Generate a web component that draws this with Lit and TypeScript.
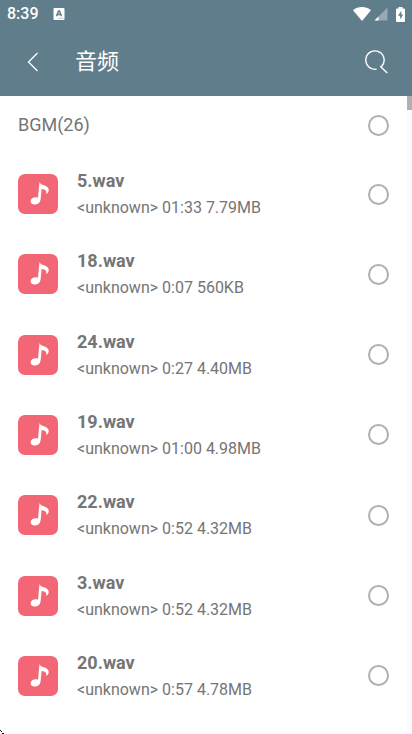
import { LitElement, html, css } from "lit";
import { customElement, property, state } from "lit/decorators.js";

interface Track {
  name: string;
  time: string;
  size: string;
}

const TRACKS: Track[] = [
  { name: "5.wav", time: "01:33", size: "7.79MB" },
  { name: "18.wav", time: "0:07", size: "560KB" },
  { name: "24.wav", time: "0:27", size: "4.40MB" },
  { name: "19.wav", time: "01:00", size: "4.98MB" },
  { name: "22.wav", time: "0:52", size: "4.32MB" },
  { name: "3.wav", time: "0:52", size: "4.32MB" },
  { name: "20.wav", time: "0:57", size: "4.78MB" },
];

const roundCheck = css`
  .check {
    appearance: none;
    flex: none;
    box-sizing: border-box;
    width: 21px;
    height: 21px;
    margin: 0;
    border: 2px solid #b0b0b0;
    border-radius: 50%;
    background: transparent;
  }
  .check:checked {
    background: #607d8b;
    border-color: #607d8b;
  }
`;

@customElement("status-bar")
export class StatusBar extends LitElement {
  static styles = css`
    :host {
      display: flex;
      align-items: center;
      height: 28px;
      padding: 0 7px;
      color: #fff;
    }
    .time {
      font-size: 16px;
      line-height: 28px;
      font-weight: 500;
    }
    .app {
      margin-left: 14px;
    }
    .signals {
      display: flex;
      align-items: center;
      margin-left: auto;
    }
    svg {
      display: block;
    }
    .cell {
      margin-left: 3px;
    }
    .battery {
      margin-left: 8px;
    }
  `;

  render() {
    return html`
      <span class="time">8:39</span>
      <svg class="app" width="12" height="12" viewBox="0 0 12 12" aria-hidden="true">
        <rect x="0.5" width="11" height="12" rx="1" fill="#fff" />
        <path d="M3.5 8.2 5.5 3h1l2 5.2M4.3 6.5h3.4" fill="none" stroke="#607d8b" stroke-width="1.5" />
        <path d="M5.5 10.3h1M7.5 10.3h1M9.3 10.3h1" stroke="#607d8b" stroke-width="0.8" />
      </svg>
      <span class="signals">
        <svg width="18" height="14" viewBox="0 0 18 14" aria-hidden="true">
          <path d="M0 3.2C5-1 13-1 18 3.2L9 14z" fill="#fff" />
        </svg>
        <svg class="cell" width="14" height="14" viewBox="0 0 14 14" aria-hidden="true">
          <path d="M13.5 0.5v13H0.5z" fill="#fff" fill-opacity="0.35" />
          <path d="M4.5 9.5v4h-4z" fill="#fff" />
        </svg>
        <svg class="battery" width="9" height="15" viewBox="0 0 9 15" aria-hidden="true">
          <path d="M2.5 0h4v1.5H8a1 1 0 0 1 1 1V14a1 1 0 0 1-1 1H1a1 1 0 0 1-1-1V2.5a1 1 0 0 1 1-1h1.5z" fill="#fff" />
          <path d="M5.3 3.8 2 8.7h2.1v3.5L7.3 7.4H5.3z" fill="#607d8b" />
        </svg>
      </span>
    `;
  }
}

@customElement("track-row")
export class TrackRow extends LitElement {
  @property({ attribute: false }) track!: Track;

  static styles = [
    roundCheck,
    css`
      :host {
        display: flex;
      }
      .row {
        flex: 1;
        display: flex;
        align-items: center;
        padding: 0 23px 0 18px;
      }
      .art {
        flex: none;
        display: block;
        margin-right: 19px;
      }
      .text {
        flex: 1;
        min-width: 0;
        display: flex;
        flex-direction: column;
        gap: 3px;
        padding-top: 1px;
      }
      .name {
        font-size: 18px;
        line-height: 24px;
        font-weight: 700;
      }
      .meta {
        font-size: 16px;
        line-height: 24px;
      }
    `,
  ];

  render() {
    const { name, time, size } = this.track;
    return html`
      <label class="row">
        <svg class="art" width="40" height="40" viewBox="0 0 40 40" aria-hidden="true">
          <rect width="40" height="40" rx="7" fill="#f26676" />
          <path
            d="M21.5 8c.8 2 2.300 2.700 4.300 3.300C30 12.500 32 15.500 30 18.500c-.6.9-1.500 1.300-1.900 1.300 1-2.500-.6-4.600-4.500-4.900L22.600 25.500C22.200 28.800 19.700 30.500 16.800 30.500c-2.500 0-4.300-1.300-4.200-3.300.1-2.300 2.400-3.900 5.200-3.900.8 0 1.600.1 2.200.4z"
            fill="#fff"
          />
        </svg>
        <span class="text">
          <span class="name">${name}</span>
          <span class="meta">&lt;unknown&gt; ${time} ${size}</span>
        </span>
        <input class="check" type="checkbox" />
      </label>
    `;
  }
}

@customElement("app-root")
export class AppRoot extends LitElement {
  @state() private tracks = TRACKS;

  static styles = [
    roundCheck,
    css`
      :host {
        display: flex;
        flex-direction: column;
        min-height: 100vh;
        background: #fff;
        color: #757575;
        font-family: Roboto, "Noto Sans CJK SC", sans-serif;
      }
      .top {
        background: #607d8b;
        color: #fff;
      }
      .bar {
        display: flex;
        align-items: center;
        height: 68px;
        padding: 0 24px;
      }
      .icon {
        display: block;
        padding: 0;
        border: 0;
        background: none;
        color: inherit;
      }
      .icon svg {
        display: block;
      }
      .title {
        flex: 1;
        margin: 0 0 0 33px;
        font-size: 22px;
        line-height: 32px;
        font-weight: 400;
      }
      .main {
        position: relative;
        flex: 1;
        display: flex;
        flex-direction: column;
        padding-bottom: 18px;
      }
      .group {
        display: flex;
        align-items: center;
        justify-content: space-between;
        height: 58px;
        padding: 0 23px 0 18px;
        font-size: 18px;
        line-height: 24px;
      }
      .list {
        flex: 1;
        display: flex;
        flex-direction: column;
      }
      .item {
        flex: 1 0 80px;
      }
      .track {
        position: absolute;
        top: 0;
        right: 0;
        bottom: 0;
        width: 5px;
        background: #fafafa;
      }
      .thumb {
        height: 14px;
        background: #b0b0b0;
      }
      .corner {
        position: absolute;
        left: 0;
        bottom: 0;
        display: block;
      }
    `,
  ];

  render() {
    return html`
      <header class="top">
        <status-bar></status-bar>
        <div class="bar">
          <button class="icon" aria-label="返回">
            <svg width="18" height="20" viewBox="0 0 18 20" fill="none" stroke="currentColor" stroke-width="1.3">
              <path d="M13.5 1 4.5 10l9 9" />
            </svg>
          </button>
          <h1 class="title">音频</h1>
          <button class="icon" aria-label="搜索">
            <svg width="24" height="24" viewBox="0 0 24 24" fill="none" stroke="currentColor" stroke-width="1.4">
              <path d="M12.5 19.2A9.2 9.2 0 1 1 17.5 16.6M16.2 16.2 23.3 23" />
            </svg>
          </button>
        </div>
      </header>
      <main class="main">
        <label class="group">
          <span>BGM(26)</span>
          <input class="check" type="checkbox" />
        </label>
        <div class="list">
          ${this.tracks.map((t) => html`<track-row class="item" .track=${t}></track-row>`)}
        </div>
        <div class="track"><div class="thumb"></div></div>
        <svg class="corner" width="4" height="4" viewBox="0 0 4 4" aria-hidden="true">
          <path d="M0 0h1v1h1v1H1V1H0zM2 3h2v1H2z" fill="#111" />
        </svg>
      </main>
    `;
  }
}
